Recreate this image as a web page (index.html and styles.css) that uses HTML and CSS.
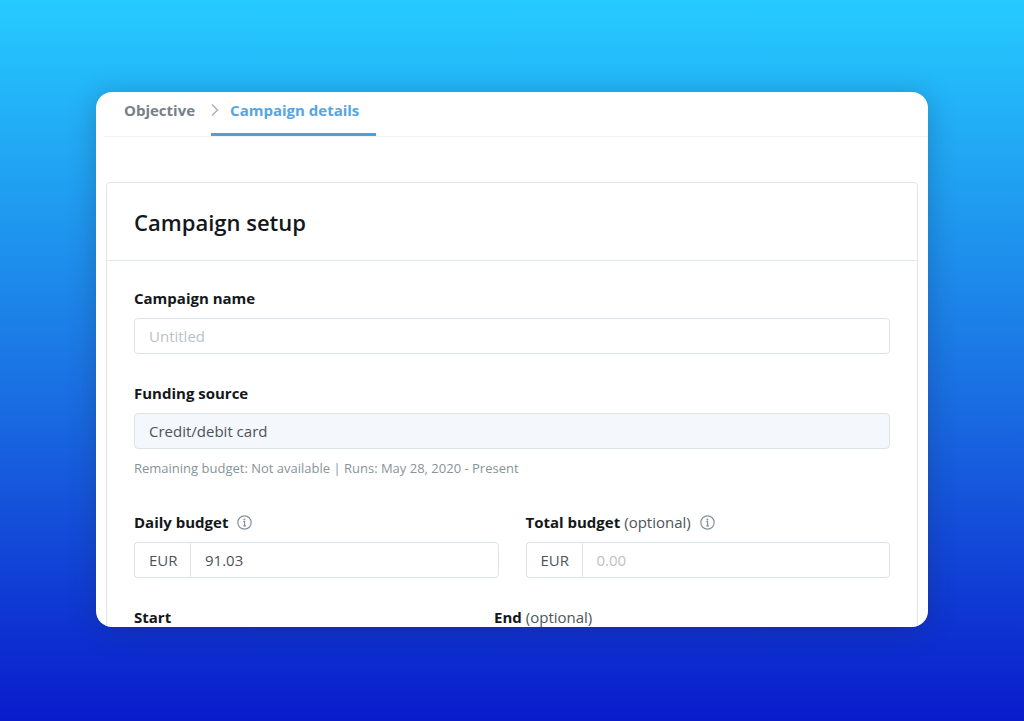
FILE: index.html
```
<!DOCTYPE html>
<html lang="en">

<head>
    <meta charset="UTF-8">
    <meta name="viewport" content="width=device-width, initial-scale=1.0">
    <title>Campaign details</title>
    <link rel="stylesheet" href="styles.css">
</head>

<body>

    <main class="window">
        <!-- Steps -->
        <nav class="steps">
            <a href="#" class="step">Objective</a>
            <div class="step-current">
                <svg class="chevron" width="8" height="14" viewBox="0 0 8 14" fill="none" stroke="#a9b3b8" stroke-width="1.5">
                    <path d="M1 1.5l5.5 5.5L1 12.5" />
                </svg>
                <a href="#" class="step active">Campaign details</a>
            </div>
        </nav>

        <form class="panel">
            <h1 class="panel-title">Campaign setup</h1>

            <div class="panel-body">
                <!-- Campaign name -->
                <div class="field">
                    <label for="campaignName">Campaign name</label>
                    <input type="text" id="campaignName" class="input" placeholder="Untitled">
                </div>

                <!-- Funding source -->
                <div class="field funding">
                    <label for="fundingSource">Funding source</label>
                    <input type="text" id="fundingSource" class="input" value="Credit/debit card" readonly>
                    <p class="help">Remaining budget: Not available | Runs: May 28, 2020 - Present</p>
                </div>

                <!-- Budgets -->
                <div class="budgets">
                    <div class="field">
                        <label for="dailyBudget">Daily budget
                            <svg class="info" width="15" height="15" viewBox="0 0 15 15" fill="none" stroke="#85929a">
                                <circle cx="7.5" cy="7.5" r="6.7" stroke-width="1.2" />
                                <path d="M6.2 6.6h1.4V11M6.2 10.8h2.8" stroke-width="1.2" />
                                <circle cx="7.4" cy="4.4" r="1" fill="#85929a" stroke="none" />
                            </svg>
                        </label>
                        <div class="input-group">
                            <span class="currency">EUR</span>
                            <input type="text" id="dailyBudget" class="input" value="91.03">
                        </div>
                    </div>
                    <div class="field">
                        <label for="totalBudget">Total budget <span class="optional">(optional)</span>
                            <svg class="info" width="15" height="15" viewBox="0 0 15 15" fill="none" stroke="#85929a">
                                <circle cx="7.5" cy="7.5" r="6.7" stroke-width="1.2" />
                                <path d="M6.2 6.6h1.4V11M6.2 10.8h2.8" stroke-width="1.2" />
                                <circle cx="7.4" cy="4.4" r="1" fill="#85929a" stroke="none" />
                            </svg>
                        </label>
                        <div class="input-group">
                            <span class="currency">EUR</span>
                            <input type="text" id="totalBudget" class="input" placeholder="0.00">
                        </div>
                    </div>
                </div>

                <!-- Dates -->
                <div class="dates">
                    <div class="field">
                        <label for="startDate">Start</label>
                        <input type="text" id="startDate" class="input">
                    </div>
                    <div class="field">
                        <label for="endDate">End <span class="optional">(optional)</span></label>
                        <input type="text" id="endDate" class="input">
                    </div>
                </div>
            </div>
        </form>
    </main>

</body>
</html>
```
FILE: styles.css
```
* {
    box-sizing: border-box;
}

body {
    margin: 0;
    height: 100vh;
    padding: 92px 96px 94px;
    display: flex;
    font-family: "Open Sans", "Noto Sans", sans-serif;
    font-size: 15px;
    line-height: 18px;
    color: #14171a;
    background: linear-gradient(#26cbff, #1a6ee2 55%, #0a1bcb);
}

.window {
    flex: 1;
    overflow: hidden;
    background-color: #fff;
    border-radius: 16px;
    box-shadow: 0 4px 28px rgba(20, 40, 70, 0.3);
}

.steps {
    display: flex;
    height: 45px;
    margin-left: 8px;
    padding-left: 20px;
    border-bottom: 1px solid #f1f3f4;
}

.step {
    padding-top: 9px;
    font-weight: 700;
    color: #758087;
    text-decoration: none;
}

.step.active {
    color: #56a5e3;
}

.step-current {
    display: flex;
    gap: 11px;
    margin-left: 16px;
    padding-right: 17px;
    border-bottom: 3px solid #4f9fda;
}

.chevron {
    margin-top: 11px;
}

.panel {
    margin: 45px 10px 0;
    border: 1px solid #e1e6e8;
    border-radius: 4px;
}

.panel-title {
    margin: 0;
    padding: 24px 27px 23px;
    border-bottom: 1px solid #e1e6e8;
    font-size: 22px;
    line-height: 30px;
    font-weight: 600;
}

.panel-body {
    padding: 28px 27px;
}

.field {
    margin-bottom: 30px;
}

.funding {
    margin-bottom: 36px;
}

label {
    display: flex;
    align-items: center;
    margin-bottom: 11px;
    font-weight: 700;
}

.optional {
    margin-left: 4px;
    font-weight: normal;
    color: #4c5458;
}

.info {
    margin-left: 9px;
}

.input {
    width: 100%;
    height: 36px;
    padding: 0 14px;
    border: 1px solid #dde3e6;
    border-radius: 4px;
    font: inherit;
    color: #4c5458;
    background-color: #fff;
}

.input:read-only {
    background-color: #f4f8fc;
}

.input::placeholder {
    color: #b9c2c7;
    opacity: 1;
}

.help {
    margin: 10px 0 0;
    font-size: 13px;
    color: #87949a;
}

.input-group {
    display: flex;
    height: 36px;
}

.currency {
    width: 56px;
    padding: 8px 0 8px 14px;
    border: 1px solid #dde3e6;
    border-right: none;
    border-radius: 4px 0 0 4px;
    color: #4c5458;
}

.input-group .input {
    flex: 1;
    min-width: 0;
    border-radius: 0 4px 4px 0;
}

.budgets {
    display: grid;
    grid-template-columns: 1fr 1fr;
    gap: 27px;
}

.dates {
    display: grid;
    grid-template-columns: 10fr 11fr;
}

.dates .input {
    width: 90%;
}
```
